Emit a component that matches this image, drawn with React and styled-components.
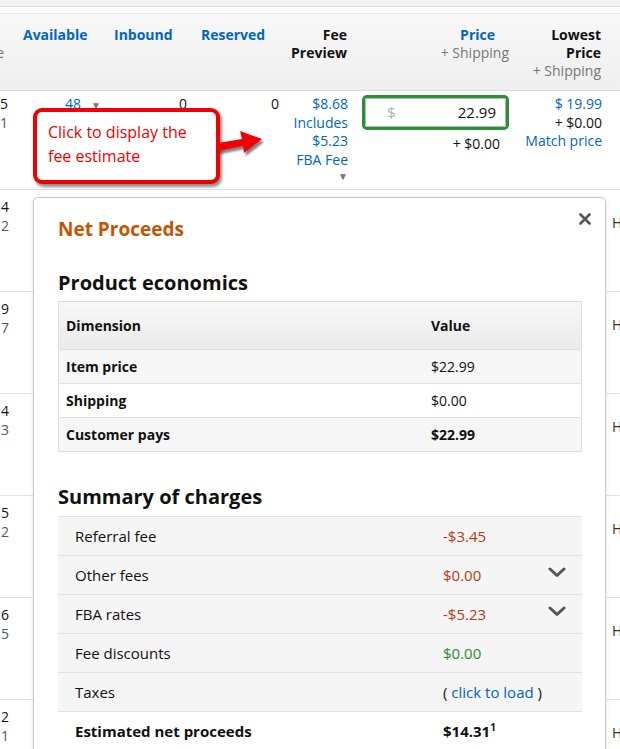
import React from "react";
import styled, { createGlobalStyle } from "styled-components";

const GlobalStyle = createGlobalStyle`
  html, body {
    margin: 0;
    padding: 0;
    background: #fff;
  }
  body {
    font-family: "Open Sans", "Liberation Sans", sans-serif;
    color: #111;
    overflow: hidden;
  }
`;

const COLS = "12px 96px 84px 92px 70px 162px 94px 10px";

const Page = styled.div`
  position: relative;
  width: 620px;
  height: 749px;
  overflow: hidden;
`;

const TopStrip = styled.div`
  height: 6px;
  background: #f3f3f3;
  border-bottom: 1px solid #e3e3e3;
`;

const Gap = styled.div`
  height: 6px;
`;

const HeaderRow = styled.div`
  display: grid;
  grid-template-columns: ${COLS};
  height: 78px;
  box-sizing: border-box;
  padding-top: 12px;
  background: linear-gradient(#f8f8f8, #efefef);
  border-top: 1px solid #e4e4e4;
  border-bottom: 1px solid #dcdcdc;
  font-size: 14px;
  line-height: 18px;
`;

const HeadCell = styled.div`
  display: flex;
  flex-direction: column;
  align-items: ${(p) => (p.$right ? "flex-end" : "flex-start")};
  padding-left: ${(p) => p.$pl || 0}px;
  padding-right: ${(p) => p.$pr || 0}px;
  white-space: nowrap;
`;

const HeadLabel = styled.span`
  font-weight: 700;
  color: ${(p) => (p.$link ? "#0066c0" : "#111")};
  margin-right: ${(p) => p.$mr || 0}px;
`;

const HeadSub = styled.span`
  color: #767676;
`;

const Row = styled.div`
  display: grid;
  grid-template-columns: ${COLS};
  height: ${(p) => p.$h}px;
  box-sizing: border-box;
  padding-top: ${(p) => p.$pt}px;
  border-bottom: 1px solid #e3e3e3;
  font-size: 14px;
  line-height: 18.5px;
`;

const Cell = styled.div`
  display: flex;
  flex-direction: column;
  align-items: ${(p) => (p.$left ? "flex-start" : "flex-end")};
  padding-right: ${(p) => p.$pr || 0}px;
  padding-left: ${(p) => p.$pl || 0}px;
  white-space: nowrap;
  overflow: visible;
`;

const Num = styled.span`
  color: ${(p) => (p.$muted ? "#4a5a6a" : "#111")};
`;

const Link = styled.span`
  color: #0066c0;
`;

const Caret = styled.span`
  color: #777;
  font-size: 10px;
  line-height: 14px;
  margin-left: ${(p) => p.$ml || 0}px;
`;

const PriceCell = styled.div`
  display: flex;
  flex-direction: column;
  align-items: flex-end;
  padding: 0 16px 0 8px;
`;

const PriceInput = styled.div`
  align-self: stretch;
  width: 147px;
  box-sizing: border-box;
  height: 35px;
  border: 3px solid #2b8f37;
  border-radius: 5px;
  display: flex;
`;

const PriceInner = styled.div`
  flex: 1;
  display: flex;
  align-items: center;
  justify-content: space-between;
  border: 1px solid #b5b5b5;
  border-radius: 3px;
  padding: 0 9px 0 21px;
  font-size: 15px;
  background: #fff;
`;

const Dollar = styled.span`
  color: #b0b0b0;
`;

const Shipping = styled.span`
  margin-top: 5px;
  font-size: 14px;
`;

const SideH = styled.span`
  color: #333;
  margin-top: 16px;
`;

const Popup = styled.div`
  position: absolute;
  left: 33px;
  top: 197px;
  width: 573px;
  height: 600px;
  box-sizing: border-box;
  background: #fff;
  border: 1px solid #c9c9c9;
  border-radius: 5px;
  box-shadow: 0 1px 4px rgba(0, 0, 0, 0.12);
  padding: 18px 23px 0 24px;
`;

const PopupHead = styled.div`
  display: flex;
  justify-content: space-between;
  align-items: flex-start;
`;

const PopupTitle = styled.div`
  color: #c45500;
  font-size: 19px;
  font-weight: 700;
  line-height: 26px;
`;

const CloseBtn = styled.div`
  margin-top: -3px;
  margin-right: -9px;
  width: 12px;
  height: 12px;
  display: flex;
`;

const Section = styled.h3`
  margin: ${(p) => p.$mt}px 0 ${(p) => p.$mb}px;
  font-size: 20px;
  font-weight: 700;
  line-height: 26px;
  color: #111;
`;

const EconTable = styled.div`
  border: 1px solid #dedede;
  font-size: 14px;
`;

const EconRow = styled.div`
  display: grid;
  grid-template-columns: 365px 1fr;
  align-items: center;
  height: ${(p) => (p.$head ? 47 : 33)}px;
  padding-left: 7px;
  background: ${(p) =>
    p.$head
      ? "linear-gradient(#f7f7f7, #ebebeb)"
      : p.$alt
      ? "#f6f6f6"
      : "#fff"};
  border-top: ${(p) => (p.$first ? "none" : "1px solid #e1e1e1")};
  font-weight: ${(p) => (p.$bold ? 700 : 400)};
`;

const EconLabel = styled.span`
  font-weight: 700;
`;

const SumTable = styled.div`
  font-size: 15px;
`;

const SumRow = styled.div`
  display: grid;
  grid-template-columns: 368px 1fr 34px;
  height: 38px;
  padding-left: 17px;
  align-items: center;
  background: ${(p) => (p.$plain ? "#fff" : "#f5f5f5")};
  border-top: 1px solid #e1e1e1;
  font-weight: ${(p) => (p.$bold ? 700 : 400)};
`;

const Value = styled.span`
  color: ${(p) =>
    p.$tone === "neg" ? "#b83a1b" : p.$tone === "pos" ? "#2b8a2b" : "#111"};
`;

const Sup = styled.sup`
  font-size: 10px;
  line-height: 0;
`;

const Chevron = styled.div`
  align-self: start;
  margin-top: 11px;
  display: flex;
`;

const Callout = styled.div`
  position: absolute;
  left: 33px;
  top: 108px;
  width: 187px;
  height: 76px;
  box-sizing: border-box;
  border: 4px solid #f00000;
  border-radius: 9px;
  background: #fff;
  box-shadow: 2px 3px 3px rgba(0, 0, 0, 0.45);
  padding: 8px 10px 0 11px;
  color: #f00000;
  font-size: 16px;
  line-height: 24px;
`;

const Arrow = styled.svg`
  position: absolute;
  left: 218px;
  top: 126px;
  overflow: visible;
`;

const ChevronIcon = () => (
  <svg width="18" height="11" viewBox="0 0 18 11">
    <polyline
      points="2,2 9,8.5 16,2"
      fill="none"
      stroke="#555"
      strokeWidth="3"
      strokeLinecap="round"
      strokeLinejoin="round"
    />
  </svg>
);

const rows = [
  ["4", "2"],
  ["9", "7"],
  ["4", "3"],
  ["5", "2"],
  ["6", "5"],
  ["2", "1"],
];

const charges = [
  { label: "Referral fee", value: "-$3.45", tone: "neg" },
  { label: "Other fees", value: "$0.00", tone: "neg", more: true },
  { label: "FBA rates", value: "-$5.23", tone: "neg", more: true },
  { label: "Fee discounts", value: "$0.00", tone: "pos" },
];

export default function App() {
  return (
    <Page>
      <GlobalStyle />
      <TopStrip />
      <Gap />
      <HeaderRow>
        <HeadCell $right $pr={8}>
          <span>&nbsp;</span>
          <HeadSub>e</HeadSub>
        </HeadCell>
        <HeadCell $pl={11}>
          <HeadLabel $link>Available</HeadLabel>
        </HeadCell>
        <HeadCell $pl={6}>
          <HeadLabel $link>Inbound</HeadLabel>
        </HeadCell>
        <HeadCell $pl={9}>
          <HeadLabel $link>Reserved</HeadLabel>
        </HeadCell>
        <HeadCell $right $pr={7}>
          <HeadLabel>Fee</HeadLabel>
          <HeadLabel>Preview</HeadLabel>
        </HeadCell>
        <HeadCell $right $pr={7}>
          <HeadLabel $link $mr={14}>
            Price
          </HeadLabel>
          <HeadSub>+ Shipping</HeadSub>
        </HeadCell>
        <HeadCell $right $pr={9}>
          <HeadLabel>Lowest</HeadLabel>
          <HeadLabel>Price</HeadLabel>
          <HeadSub>+ Shipping</HeadSub>
        </HeadCell>
        <HeadCell />
      </HeaderRow>

      <Row $h={99} $pt={4}>
        <Cell $pr={4}>
          <Num>5</Num>
          <Num $muted>1</Num>
        </Cell>
        <Cell $pr={7}>
          <Link>
            48<Caret $ml={10}>▼</Caret>
          </Link>
        </Cell>
        <Cell $pr={5}>
          <Num>0</Num>
        </Cell>
        <Cell $pr={5}>
          <Num>0</Num>
        </Cell>
        <Cell $pr={6}>
          <Link>$8.68</Link>
          <Link>Includes</Link>
          <Link>$5.23</Link>
          <Link>FBA Fee</Link>
          <Caret>▼</Caret>
        </Cell>
        <PriceCell>
          <PriceInput>
            <PriceInner>
              <Dollar>$</Dollar>
              <span>22.99</span>
            </PriceInner>
          </PriceInput>
          <Shipping>+ $0.00</Shipping>
        </PriceCell>
        <Cell $pr={8}>
          <Link>$ 19.99</Link>
          <Num>+ $0.00</Num>
          <Link>Match price</Link>
        </Cell>
        <Cell />
      </Row>

      {rows.map(([a, b], i) => (
        <Row key={i} $h={102} $pt={8}>
          <Cell $pr={3}>
            <Num>{a}</Num>
            <Num $muted>{b}</Num>
          </Cell>
          <Cell />
          <Cell />
          <Cell />
          <Cell />
          <Cell />
          <Cell />
          <Cell $left $pl={2}>
            <SideH>H</SideH>
          </Cell>
        </Row>
      ))}

      <Callout>
        Click to display the
        <br />
        fee estimate
      </Callout>
      <Arrow width="46" height="32" viewBox="0 0 46 32">
        <defs>
          <filter id="sh" x="-20%" y="-20%" width="160%" height="160%">
            <feDropShadow dx="2" dy="3" stdDeviation="1.2" floodOpacity="0.5" />
          </filter>
        </defs>
        <polygon
          points="0,17 24,13 22,5 44,13 26,27 25,20 0,25"
          fill="#f00000"
          filter="url(#sh)"
        />
      </Arrow>

      <Popup>
        <PopupHead>
          <PopupTitle>Net Proceeds</PopupTitle>
          <CloseBtn>
            <svg width="12" height="12" viewBox="0 0 12 12">
              <path
                d="M1.5 1.5 L10.5 10.5 M10.5 1.5 L1.5 10.5"
                stroke="#555"
                strokeWidth="2.6"
                strokeLinecap="round"
              />
            </svg>
          </CloseBtn>
        </PopupHead>

        <Section $mt={28} $mb={5}>
          Product economics
        </Section>
        <EconTable>
          <EconRow $head $first>
            <EconLabel>Dimension</EconLabel>
            <EconLabel>Value</EconLabel>
          </EconRow>
          <EconRow $alt>
            <EconLabel>Item price</EconLabel>
            <span>$22.99</span>
          </EconRow>
          <EconRow>
            <EconLabel>Shipping</EconLabel>
            <span>$0.00</span>
          </EconRow>
          <EconRow $alt $bold>
            <EconLabel>Customer pays</EconLabel>
            <span>$22.99</span>
          </EconRow>
        </EconTable>

        <Section $mt={32} $mb={6}>
          Summary of charges
        </Section>
        <SumTable>
          {charges.map((c) => (
            <SumRow key={c.label}>
              <span>{c.label}</span>
              <Value $tone={c.tone}>{c.value}</Value>
              {c.more ? (
                <Chevron>
                  <ChevronIcon />
                </Chevron>
              ) : (
                <span />
              )}
            </SumRow>
          ))}
          <SumRow>
            <span>Taxes</span>
            <span>
              ( <Link>click to load</Link> )
            </span>
            <span />
          </SumRow>
          <SumRow $plain $bold>
            <span>Estimated net proceeds</span>
            <span>
              $14.31<Sup>1</Sup>
            </span>
            <span />
          </SumRow>
        </SumTable>
      </Popup>
    </Page>
  );
}
